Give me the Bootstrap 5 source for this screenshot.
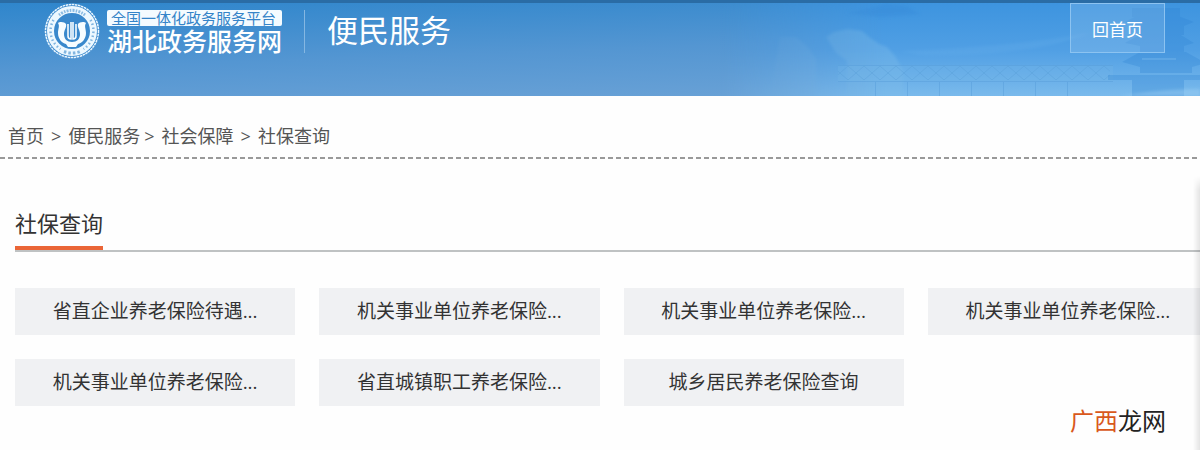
<!DOCTYPE html>
<html lang="zh-CN">
<head>
<meta charset="utf-8">
<meta name="viewport" content="width=device-width, initial-scale=1">
<title>社保查询 - 湖北政务服务网</title>
<link href="https://cdn.jsdelivr.net/npm/bootstrap@5.3.0/dist/css/bootstrap.min.css" rel="stylesheet">
<style>
body{font-family:"Open Sans","Noto Sans CJK SC",sans-serif;color:#333;background:#fefefe}
a{color:inherit;text-decoration:none}
.site-head{height:96px;border-top:3px solid #2a6ca5;background:linear-gradient(178deg,#2f86cc 0%,#5496d2 50%,#6ea4d7 100%);overflow:hidden}
.scene{position:absolute;top:0;right:0;width:480px;height:93px}
.head-left{gap:22px;padding-left:44px}
.brand{gap:6px}
.brand-words{padding-top:7px}
.brand-top{font-size:15px;line-height:16px;padding:0 4px;border-radius:2px;background:#f4fbff;color:#3584c8}
.brand-name{font-size:25px;line-height:30px;font-weight:500}
.split-line{width:1px;height:43px;margin-top:7px;background:#85b7e2}
.head-title{font-size:31px;line-height:42px;padding-top:6px}
.home-btn{width:95px;height:50px;margin-right:35px;padding:4px 0 0;font-size:17px;border:1px solid #8cc3f1;border-radius:0;background:rgba(255,255,255,.13);color:#fff}
.crumbs{font-size:18px;line-height:28px;color:#555;padding:26px 8px 7px}
.sep{padding:0 7px}
.sep-tight{padding:0 7px 0 4px}
.dash-rule{height:2px;background:repeating-linear-gradient(90deg,#999 0 5px,transparent 5px 8px)}
.section-head{margin:48px 0 36px 15px;border-bottom:2px solid #bfc2c3}
.section-head h1{font-size:22px;line-height:33px;padding-bottom:6px;border-bottom:4px solid #ea6537}
.tiles{display:grid;grid-template-columns:repeat(4,1fr);gap:24px;margin:0 -8px 0 15px}
.tile{height:47px;line-height:47px;font-size:19px;background:#f0f1f3;text-align:center;white-space:nowrap}
.page-main{min-height:calc(100vh - 96px)}
.edge{position:absolute;top:80px;bottom:0;right:0;width:7px;background:linear-gradient(90deg,transparent,rgba(0,0,0,.1));-webkit-mask-image:linear-gradient(transparent,#000 14px)}
.mark-text{font-size:24px;line-height:30px;color:#222;margin-right:34px}
.mark-text span{color:#d9581c}
</style>
</head>
<body class="overflow-x-hidden">
<header class="site-head position-relative text-white">
  <svg class="scene" viewBox="0 0 480 93" preserveAspectRatio="none" aria-hidden="true">
    <defs>
      <linearGradient id="sky" x2="0" y2="1"><stop stop-color="#3d94df"/><stop offset=".5" stop-color="#509fe4"/><stop offset="1" stop-color="#7abaec"/></linearGradient>
      <linearGradient id="fade"><stop stop-color="#000"/><stop offset=".35" stop-color="#fff"/></linearGradient>
      <mask id="m"><path fill="url(#fade)" d="M0 0h480v93H0z"/></mask>
      <pattern id="truss" width="32" height="14" patternUnits="userSpaceOnUse" y="63"><path d="M0 0l16 14L32 0M0 14L16 0l16 14" fill="none" stroke="#559bd6"/></pattern>
      <filter id="soft" x="-20%" width="140%" y="-30%" height="160%"><feGaussianBlur stdDeviation="1.500"/></filter>
    </defs>
    <g mask="url(#m)">
      <path fill="url(#sky)" d="M0 0h480v93H0z"/>
      <path d="M126 10l24-5 16-4 20 2 14 8-40 3z" fill="#378cda" opacity=".5" filter="url(#soft)"/>
      <path d="M106 34l8-5 14-3 14 2 7 6 10 7 8 3 8 9 8 14v26h-56V58l-11-8z" fill="#7bbbe9" opacity=".4" filter="url(#soft)"/>
      <path d="M60 34l16 0 12 10 8 12v37H50z" fill="#7bb6e6" opacity=".3" filter="url(#soft)"/>
    </g>
    <path d="M180 48q110-4 190-18-60 24-170 22z" fill="#70b5ed" opacity=".2" filter="url(#soft)"/>
    <path fill="#75b5e8" opacity=".3" d="M118 62h275v17H118z"/>
    <path fill="url(#truss)" opacity=".4" d="M118 63h272v14H118z"/>
    <path d="M118 62.500h275M118 78.500h275M155.500 79v14M187.500 79v14M219.500 79v14M251.500 79v14M283.500 79v14M315.500 79v14M347.500 79v14" stroke="#5299d8" opacity=".4"/>
    <g fill="#2f84d4" opacity=".3">
      <path d="M412 5h48v9h-48zM405 19l13-7h38l18 7-10 4v9h-46v-9zM405 40l14-8h42l13 8-10 3v6h-44v-6zM402 59l18-10h46l20 11-14 4v6h-52v-6z"/>
      <path d="M388 72h92v5h-92zM412 77h52v16h-52z"/>
    </g>
    <path d="M422 56h34" stroke="#86c1f0" opacity=".6"/>
    <path d="M400 93q50-8 80-7v7z" fill="#a3d3f5" opacity=".4" filter="url(#soft)"/>
  </svg>
  <div class="d-flex align-items-start justify-content-between position-relative">
    <div class="head-left d-flex align-items-start">
      <a href="#" class="brand d-flex align-items-start">
        <svg width="57" height="57" viewBox="0 0 57 57" aria-hidden="true">
          <circle cx="28" cy="28" r="26.500" fill="#3988cc" stroke="#eaf6ff" stroke-width="1.500" stroke-dasharray="2.500 .6"/>
          <circle cx="28" cy="28" r="21.500" fill="none" stroke="#edf8ff" stroke-width="7"/>
          <g fill="none" stroke="#3988cc">
            <path d="M15 12a20.500 20.500 0 0 1 26 0" stroke-width="3" stroke-dasharray="1.500 1.200 2 1.200" opacity=".55"/>
            <path d="M20 48.500a22 22 0 0 0 16 0" stroke-width="3" stroke-dasharray="2.500 2" opacity=".6"/>
            <path d="M9.500 17a21.500 21.500 0 0 0 7 29M46.500 17a21.500 21.500 0 0 1-7 29" stroke-width="2.500" stroke-dasharray="1.500 2.500" opacity=".6"/>
          </g>
          <path d="M14 20c2-2 7-1 8 1 1 3-2 6-2 10 0 5 3 8 8 8s8-3 8-8c0-4-3-7-2-10 1-2 6-3 8-1-2 3 0 6 0 10 0 6-4 10-8 11l-2 3H24l-2-3c-4-1-8-5-8-11 0-4 2-7 0-10z" fill="#f6fcff"/>
          <path d="M24 21v12q0 3 3 3V19M32 21v12q0 3-3 3V19" fill="none" stroke="#f6fcff" stroke-width="1.600"/>
        </svg>
        <span class="brand-words d-flex flex-column"><span class="brand-top">全国一体化政务服务平台</span><span class="brand-name">湖北政务服务网</span></span>
      </a>
      <div class="split-line"></div>
      <div class="head-title">便民服务</div>
    </div>
    <button type="button" class="btn home-btn">回首页</button>
  </div>
</header>
<main class="page-main position-relative">
  <nav class="crumbs d-flex" aria-label="breadcrumb"><a href="#">首页</a><span class="sep">&gt;</span><a href="#">便民服务</a><span class="sep-tight">&gt;</span><a href="#">社会保障</a><span class="sep">&gt;</span><a href="#">社保查询</a></nav>
  <div class="dash-rule"></div>
  <div class="section-head"><h1 class="d-inline-block align-top mb-0 fw-normal">社保查询</h1></div>
  <div class="tiles">
    <a href="#" class="tile">省直企业养老保险待遇...</a>
    <a href="#" class="tile">机关事业单位养老保险...</a>
    <a href="#" class="tile">机关事业单位养老保险...</a>
    <a href="#" class="tile">机关事业单位养老保险...</a>
    <a href="#" class="tile">机关事业单位养老保险...</a>
    <a href="#" class="tile">省直城镇职工养老保险...</a>
    <a href="#" class="tile">城乡居民养老保险查询</a>
  </div>
  <div class="mark-text text-end"><span>广西</span>龙网</div>
  <div class="edge"></div>
</main>
<script src="https://cdn.jsdelivr.net/npm/bootstrap@5.3.0/dist/js/bootstrap.bundle.min.js"></script>
</body>
</html>
